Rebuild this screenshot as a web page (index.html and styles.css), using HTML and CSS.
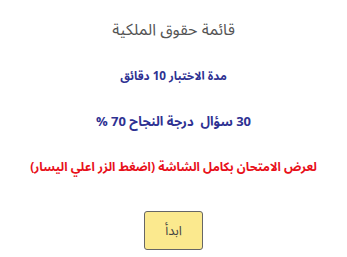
FILE: index.html
```html
<!DOCTYPE html>
<html lang="ar" dir="rtl">
<head>
<meta charset="utf-8">
<link rel="stylesheet" href="styles.css">
</head>
<body>
<main class="quiz">
  <h1 class="title">قائمة حقوق الملكية</h1>
  <p class="info">مدة الاختبار 10 دقائق</p>
  <p class="info big">30 سؤال&nbsp; درجة النجاح 70 %</p>
  <p class="note">لعرض الامتحان بكامل الشاشة (اضغط الزر اعلي اليسار)</p>
  <button class="start">ابدأ</button>
</main>
</body>
</html>
```
FILE: styles.css
```css
html, body {
  margin: 0;
  padding: 0;
  background: #fff;
}
body {
  font-family: "Noto Sans Arabic", "Liberation Sans", sans-serif;
}
.quiz {
  display: flex;
  flex-direction: column;
  align-items: center;
  padding-top: 18px;
}
.title {
  margin: 0;
  height: 24px;
  line-height: 24px;
  font-size: 16px;
  font-weight: normal;
  color: #555;
}
.info {
  margin: 25px 0 0;
  height: 20px;
  line-height: 20px;
  font-size: 11.7px;
  font-weight: bold;
  color: #2e3192;
}
.info.big {
  margin-top: 25px;
  font-size: 13px;
}
.note {
  margin: 25px 0 0;
  height: 20px;
  line-height: 20px;
  font-size: 12.2px;
  font-weight: bold;
  color: #e8101a;
}
.start {
  margin-top: 34px;
  width: 59px;
  height: 39px;
  background: #fbe98e;
  border: 1px solid #666;
  border-radius: 3px;
  font-family: inherit;
  font-size: 13px;
  color: #444;
}
```
